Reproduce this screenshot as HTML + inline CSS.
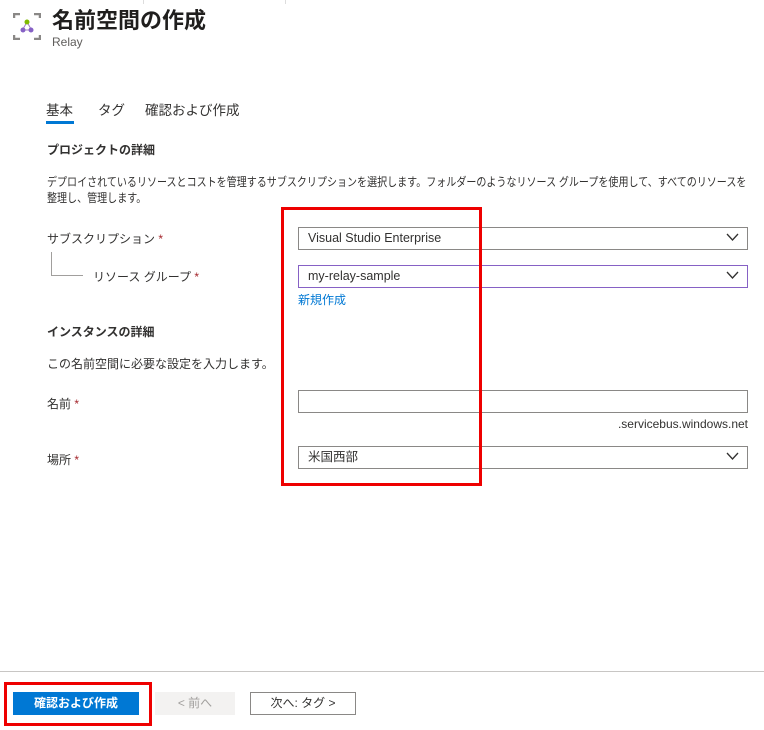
<!DOCTYPE html>
<html><head><meta charset="utf-8"><style>
body{margin:0;width:764px;height:730px;background:#fff;font-family:"Liberation Sans","Noto Sans CJK JP",sans-serif;color:#323130;position:relative;overflow:hidden}
.a{position:absolute;white-space:nowrap}
.f{font-size:12px}
.inp{position:absolute;left:298px;font-size:12.5px;line-height:21px;padding-left:9px;box-sizing:border-box;width:450px;height:23px;border:1px solid #8a8886}
.chev{position:absolute;right:8px;top:5px}
.st{color:#a4262c}
</style></head><body>
<div class="a" style="left:143px;top:0;width:1px;height:4px;background:#ddd"></div>
<div class="a" style="left:285px;top:0;width:1px;height:4px;background:#ddd"></div>
<svg class="a" style="left:13px;top:13px" width="28" height="27" viewBox="0 0 28 27">
<path d="M1 5V1H7M21 1H27V5M1 22V26H7M21 26H27V22" stroke="#8a8886" stroke-width="2.5" fill="none"/>
<path d="M14 9L10 16M14 9L18 16M10 17H18" stroke="#a07cc5" stroke-width="1"/>
<circle cx="14" cy="9" r="2.5" fill="#7fba00"/><circle cx="10" cy="17" r="2.5" fill="#8661c5"/><circle cx="18" cy="17" r="2.5" fill="#8661c5"/></svg>
<div class="a" style="left:52px;top:3px;font-size:22px;font-weight:bold;color:#201f1e">名前空間の作成</div>
<div class="a" style="left:52px;top:35px;font-size:12px;color:#605e5c">Relay</div>
<div class="a" style="left:46px;top:99px;font-size:13.5px">基本</div>
<div class="a" style="left:46px;top:121px;width:28px;height:3px;background:#0078d4"></div>
<div class="a" style="left:98px;top:99px;font-size:13.5px">タグ</div>
<div class="a" style="left:145px;top:99px;font-size:13.5px">確認および作成</div>
<div class="a f" style="left:47px;top:141px;font-weight:bold">プロジェクトの詳細</div>
<div class="a" style="left:47px;top:174px;line-height:16px;font-size:11.8px;transform:scaleX(0.85);transform-origin:0 0">デプロイされているリソースとコストを管理するサブスクリプションを選択します。フォルダーのようなリソース グループを使用して、すべてのリソースを<br>整理し、管理します。</div>
<div class="a f" style="left:47px;top:230px">サブスクリプション <span class="st">*</span></div>
<div class="a" style="left:51px;top:252px;width:1px;height:23px;background:#a19f9d"></div>
<div class="a" style="left:51px;top:275px;width:32px;height:1px;background:#a19f9d"></div>
<div class="a f" style="left:93px;top:268px">リソース グループ <span class="st">*</span></div>
<div class="a f" style="left:47px;top:323px;font-weight:bold">インスタンスの詳細</div>
<div class="a f" style="left:47px;top:355px">この名前空間に必要な設定を入力します。</div>
<div class="a f" style="left:47px;top:395px">名前 <span class="st">*</span></div>
<div class="a f" style="left:47px;top:451px">場所 <span class="st">*</span></div>
<div class="inp" style="top:227px">Visual Studio Enterprise<svg class="chev" width="13" height="9"><path d="M1 1L6.5 7L12 1" stroke="#323130" fill="none" stroke-width="1.3"/></svg></div>
<div class="inp" style="top:265px;border-color:#8661c5">my-relay-sample<svg class="chev" width="13" height="9"><path d="M1 1L6.5 7L12 1" stroke="#323130" fill="none" stroke-width="1.3"/></svg></div>
<div class="a f" style="left:298px;top:291px;color:#0078d4">新規作成</div>
<div class="inp" style="top:390px"></div>
<div class="a f" style="right:16px;top:417px">.servicebus.windows.net</div>
<div class="inp" style="top:446px">米国西部<svg class="chev" width="13" height="9"><path d="M1 1L6.5 7L12 1" stroke="#323130" fill="none" stroke-width="1.3"/></svg></div>
<div class="a" style="left:281px;top:207px;width:195px;height:273px;border:3px solid #e00"></div>
<div class="a" style="left:0;top:671px;width:764px;height:1px;background:#c8c6c4"></div>
<div class="a" style="left:4px;top:682px;width:142px;height:38px;border:3px solid #e00"></div>
<div class="a" style="left:13px;top:692px;width:126px;height:23px;background:#0078d4;color:#fff;font-size:12px;font-weight:bold;text-align:center;line-height:23px">確認および作成</div>
<div class="a" style="left:155px;top:692px;width:80px;height:23px;background:#f3f2f1;color:#a19f9d;font-size:12px;text-align:center;line-height:23px">&lt; 前へ</div>
<div class="a" style="left:250px;top:692px;width:104px;height:21px;border:1px solid #8a8886;font-size:12px;text-align:center;line-height:21px">次へ: タグ &gt;</div>
</body></html>
